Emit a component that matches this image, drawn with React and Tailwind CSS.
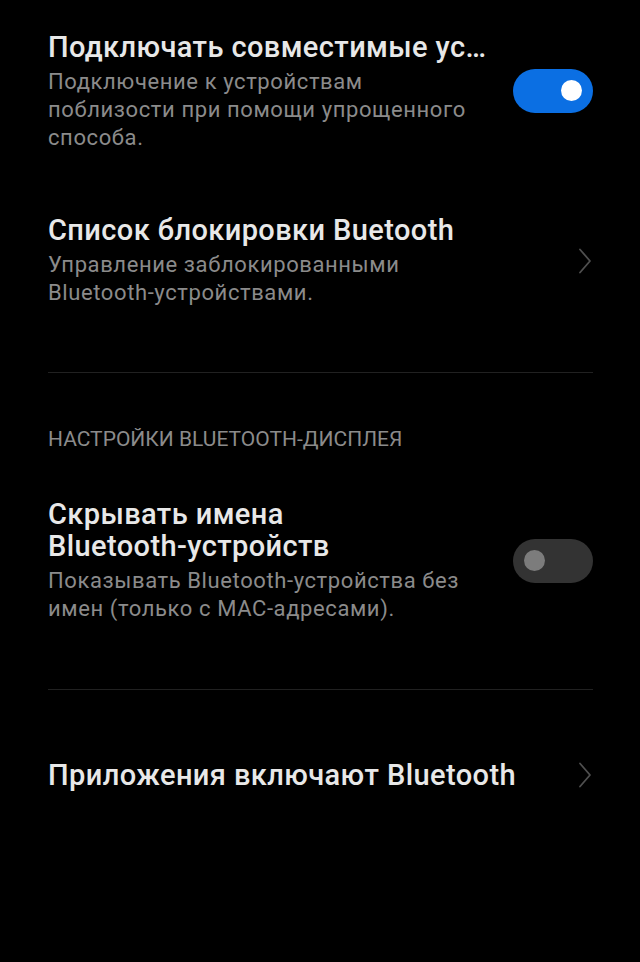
import React from 'react'

const Toggle = ({ on }) => (
  <div
    className={`w-[80px] h-[44px] rounded-full flex items-center px-[11px] shrink-0 ${
      on ? 'bg-[#0b6fe3] justify-end' : 'bg-[#333333] justify-start'
    }`}
  >
    <div className={`w-[21px] h-[21px] rounded-full ${on ? 'bg-white' : 'bg-[#7c7c7c]'}`}></div>
  </div>
)

const Chevron = () => (
  <svg width="14" height="26" viewBox="0 0 14 26" className="shrink-0 mr-[1px]">
    <path d="M2 1.5 L12 13 L2 24.5" fill="none" stroke="#4f4f4f" strokeWidth="1.8" strokeLinecap="round" strokeLinejoin="round" />
  </svg>
)

const Title = ({ children, truncate }) => (
  <div
    className={`text-[29px] leading-[32px] tracking-[0.4px] font-medium text-[#e8e8e8] ${truncate ? 'truncate' : ''}`}
  >
    {children}
  </div>
)

const Sub = ({ children }) => (
  <div className="mt-[5px] text-[22px] leading-[28px] tracking-[0.6px] text-[#8b8b8b]">{children}</div>
)

const App = () => {
  return (
    <div
      className="w-[640px] h-[962px] bg-black pl-12 pr-[47px] flex flex-col overflow-hidden"
      style={{ fontFamily: 'Roboto, "Noto Sans", sans-serif' }}
    >
      <div className="mt-[31px] flex items-center justify-between">
        <div className="w-[440px] min-w-0">
          <Title truncate>Подключать совместимые устройства</Title>
          <Sub>Подключение к устройствам поблизости при помощи упрощенного способа.</Sub>
        </div>
        <div className="mb-[2px]">
          <Toggle on />
        </div>
      </div>

      <div className="mt-[62px] flex items-center justify-between">
        <div className="flex-1 min-w-0 pr-6">
          <Title>Список блокировки Buetooth</Title>
          <Sub>
            Управление заблокированными
            <br />
            <span className="whitespace-nowrap">Bluetooth-устройствами.</span>
          </Sub>
        </div>
        <Chevron />
      </div>

      <div className="mt-[65px] h-px bg-[#212121]"></div>

      <div className="mt-[54px] text-[21px] leading-[24px] text-[#8b8b8b]">НАСТРОЙКИ BLUETOOTH-ДИСПЛЕЯ</div>

      <div className="mt-[47px] flex items-center justify-between">
        <div className="w-[440px] min-w-0">
          <Title>
            Скрывать имена <span className="whitespace-nowrap">Bluetooth-устройств</span>
          </Title>
          <Sub>
            Показывать <span className="whitespace-nowrap">Bluetooth-устройства</span> без имен (только с{' '}
            <span className="whitespace-nowrap">MAC-адресами).</span>
          </Sub>
        </div>
        <Toggle />
      </div>

      <div className="mt-[66px] h-px bg-[#212121]"></div>

      <div className="mt-[69px] flex items-center justify-between">
        <div className="flex-1 min-w-0 pr-6">
          <Title>Приложения включают Bluetooth</Title>
        </div>
        <Chevron />
      </div>
    </div>
  )
}

export default App
